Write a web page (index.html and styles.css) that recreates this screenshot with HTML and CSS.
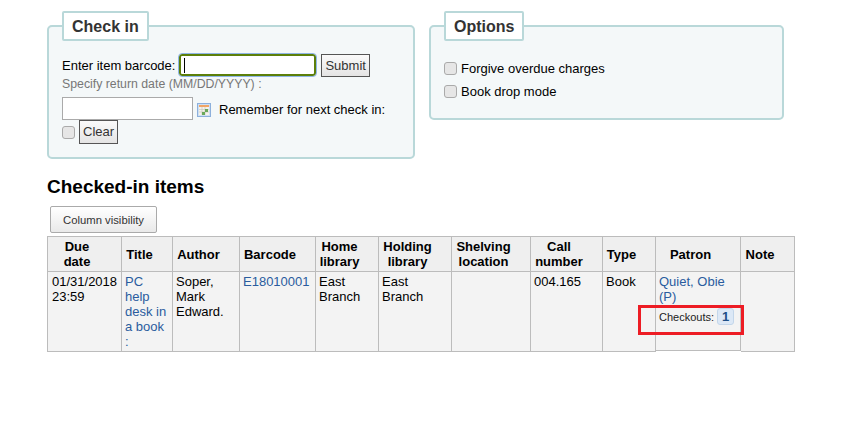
FILE: index.html
```html
<!DOCTYPE html>
<html lang="en">
<head>
<meta charset="utf-8">
<title>Check in</title>
<link rel="stylesheet" href="styles.css">
</head>
<body>
<main class="page">
  <div class="panels">
    <fieldset class="panel panel-checkin">
      <legend>Check in</legend>
      <div class="row row-barcode">
        <label for="barcode">Enter item barcode:</label>
        <span class="caret-wrap"><input id="barcode" class="input-barcode" type="text"><span class="caret"></span></span>
        <button class="btn" type="button">Submit</button>
      </div>
      <div class="hint">Specify return date (MM/DD/YYYY) :</div>
      <div class="row row-date">
        <input class="input-date" type="text">
        <svg class="cal" width="14" height="14" viewBox="0 0 14 14" aria-hidden="true">
          <rect x="0.5" y="0.5" width="13" height="13" fill="#cfe0f4" stroke="#8db0dc"/>
          <rect x="2" y="2" width="10" height="2" fill="#f0a566"/>
          <rect x="2" y="4" width="10" height="8" fill="#f5f2ea"/>
          <path d="M2 6.5h10M2 9h10M5 4v8M8 4v8" stroke="#c4c4ba" stroke-width="0.6"/>
          <rect x="5" y="9" width="3" height="3" fill="#6aa85a"/>
          <rect x="8" y="6" width="3" height="3" fill="#6aa85a"/>
        </svg>
        <span class="remember">Remember for next check in:</span>
      </div>
      <div class="row row-clear">
        <input class="check" type="checkbox">
        <button class="btn" type="button">Clear</button>
      </div>
    </fieldset>
    <fieldset class="panel panel-options">
      <legend>Options</legend>
      <label class="opt"><input class="check" type="checkbox">Forgive overdue charges</label>
      <label class="opt"><input class="check" type="checkbox">Book drop mode</label>
    </fieldset>
  </div>

  <h2 class="heading">Checked-in items</h2>
  <button class="btn-col" type="button">Column visibility</button>

  <table class="items">
    <colgroup>
      <col class="c1"><col class="c2"><col class="c3"><col class="c4"><col class="c5"><col class="c6">
      <col class="c7"><col class="c8"><col class="c9"><col class="c10"><col class="c11">
    </colgroup>
    <thead>
      <tr>
        <th>Due<br>date</th>
        <th>Title</th>
        <th>Author</th>
        <th>Barcode</th>
        <th>Home<br>library</th>
        <th>Holding<br>library</th>
        <th>Shelving<br>location</th>
        <th>Call<br>number</th>
        <th>Type</th>
        <th>Patron</th>
        <th>Note</th>
      </tr>
    </thead>
    <tbody>
      <tr>
        <td class="first">01/31/2018 23:59</td>
        <td><a href="#">PC help desk in a book :</a></td>
        <td>Soper, Mark Edward.</td>
        <td><a href="#">E18010001</a></td>
        <td>East Branch</td>
        <td>East Branch</td>
        <td></td>
        <td>004.165</td>
        <td>Book</td>
        <td class="patron">
          <a href="#">Quiet, Obie (P)</a>
          <div class="checkouts">Checkouts: <span class="badge">1</span></div>
        </td>
        <td></td>
      </tr>
    </tbody>
  </table>
  <div class="highlight"></div>
</main>
</body>
</html>
```

FILE: styles.css
```css
* { box-sizing: border-box; }
html, body { margin: 0; padding: 0; background: #fff; }
body {
  font-family: "Liberation Sans", Arial, sans-serif;
  font-size: 13px;
  color: #000;
  width: 849px;
  height: 429px;
  overflow: hidden;
}
.page { position: relative; padding: 11px 0 0 47px; }
.panels { display: flex; align-items: flex-start; gap: 14px; }
.panel {
  margin: 0;
  padding: 0 13px;
  border: 2px solid #b9d8d9;
  border-radius: 5px;
  background: #f4f8f9;
  min-width: 0;
}
.panel-checkin { width: 368px; height: 148px; }
.panel-options { width: 355px; height: 109px; }
.panel legend {
  margin-left: 0;
  padding: 0 8px;
  height: 30px;
  line-height: 28px;
  background: #fff;
  border: 2px solid #b9d8d9;
  border-radius: 2px;
  font-size: 16px;
  font-weight: bold;
  color: #333;
}
.row { display: flex; align-items: center; }
.row-barcode { margin-top: 13px; height: 23px; }
.row-barcode label { margin-right: 4px; }
.caret-wrap { position: relative; display: block; height: 23px; }
.input-barcode {
  display: block;
  width: 137px;
  height: 22px;
  border: 2px solid #5c7f0a;
  border-radius: 3px;
  background: #fff;
  outline: 1px solid #8fb6e6;
  padding: 0;
}
.caret {
  position: absolute;
  left: 5px;
  top: 4px;
  width: 1px;
  height: 15px;
  background: #000;
}
.btn {
  font: 13px "Liberation Sans", Arial, sans-serif;
  color: #333;
  height: 23px;
  padding: 0 3px;
  margin: 0 0 0 5px;
  border: 1px solid #555;
  background: linear-gradient(#fafafa, #e4e4e4);
}
.hint { height: 20px; line-height: 15px; font-size: 12.3px; color: #777; }
.row-date { height: 23px; }
.input-date {
  width: 131px;
  height: 23px;
  border: 1px solid #aaa;
  background: #fff;
  padding: 0;
}
.cal { margin: 2px 0 0 4px; flex: none; }
.remember { margin-left: 8px; padding-top: 2px; }
.row-clear { height: 24px; }
.row-clear .btn { height: 24px; margin-left: 4px; padding-bottom: 2px; }
.check {
  appearance: none;
  width: 13px;
  height: 13px;
  margin: 0;
  border: 1px solid #aaa;
  border-radius: 3px;
  background: #e6e6e6;
  flex: none;
}
.opt { display: flex; align-items: center; height: 23px; }
.opt .check { margin-right: 4px; }
.panel-options .opt:first-of-type { margin-top: 16px; }
.heading {
  margin: 17px 0 0;
  font-size: 19px;
  line-height: 22px;
  font-weight: bold;
  color: #000;
}
.btn-col {
  display: block;
  margin: 8px 0 0 3px;
  width: 107px;
  height: 27px;
  padding: 0;
  font: 11.3px "Liberation Sans", Arial, sans-serif;
  color: #333;
  border: 1px solid #aaa;
  border-radius: 2px;
  background: linear-gradient(#fff, #e9e9e9);
}
.items {
  margin-top: 3px;
  border-collapse: collapse;
  table-layout: fixed;
  width: 747px;
  background: #f3f3f3;
}
.items th, .items td { border: 1px solid #bcbcbc; line-height: 15px; }
.items th {
  height: 35px;
  background: #efefef;
  font-weight: bold;
  text-align: center;
  padding: 2px 18px 2px 3px;
  white-space: nowrap;
}
.items td { vertical-align: top; padding: 2px 4px 0 3px; height: 80px; }
.items td.first { padding-left: 4px; }
.items a { color: #2a5c9e; text-decoration: none; }
.c1 { width: 74px; } .c2 { width: 51px; } .c3 { width: 67px; } .c4 { width: 76px; }
.c5 { width: 63px; } .c6 { width: 73px; } .c7 { width: 79px; } .c8 { width: 72px; }
.c9 { width: 53px; } .c10 { width: 85px; } .c11 { width: 54px; }
.items .patron { border-bottom: 1px solid #fff; box-shadow: inset 0 -1px 0 #bcbcbc; }
.checkouts { margin-top: 4px; font-size: 11px; line-height: 16px; color: #222; display: flex; gap: 3px; align-items: center; }
.badge {
  display: block;
  width: 17px;
  height: 17px;
  text-align: center;
  font-size: 13px;
  line-height: 15px;
  font-weight: bold;
  color: #1f4f86;
  background: #dce8f6;
  border: 1px solid #c3d6ea;
  border-radius: 3px;
}
.highlight {
  position: absolute;
  left: 638px;
  top: 305px;
  width: 106px;
  height: 30px;
  border: 3px solid #ed1c24;
}
```
